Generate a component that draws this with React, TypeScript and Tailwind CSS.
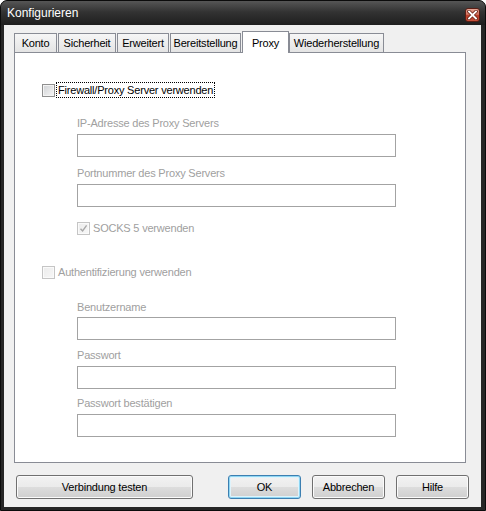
import React from 'react';

const font = "font-['Liberation_Sans',Arial,sans-serif] text-[11px] tracking-[-0.2px]";

interface Tab {
  label: string;
  className: string;
  active?: boolean;
}

const tabs: Tab[] = [
  { label: 'Konto', className: 'w-[43px]' },
  { label: 'Sicherheit', className: 'ml-[1px] w-[58px]' },
  { label: 'Erweitert', className: 'ml-[1px] w-[52px]' },
  { label: 'Bereitstellung', className: 'ml-[1px] w-[71px]' },
  { label: 'Proxy', className: 'ml-[1px] w-[47px]', active: true },
  { label: 'Wiederherstellung', className: 'w-[95px]' },
];

const CheckBox: React.FC<{ disabled?: boolean; checked?: boolean }> = ({ disabled, checked }) => (
  <div
    className={
      disabled
        ? 'w-[13px] h-[13px] shrink-0 border border-[#c5c5c5] bg-[linear-gradient(135deg,#ececec,#f7f7f7)] shadow-[inset_0_0_0_1px_#fafafa] flex items-center justify-center'
        : 'w-[13px] h-[13px] shrink-0 border border-[#8f8f8f] bg-[linear-gradient(135deg,#cfd1d4,#f7f7f7)] shadow-[inset_0_0_0_1px_#f4f4f4] flex items-center justify-center'
    }
  >
    {checked && (
      <svg width="9" height="9" viewBox="0 0 9 9">
        <path d="M1.5 4.8 L3.6 7 L7.6 1.4" fill="none" stroke="#a8a8a8" strokeWidth="1.4" />
      </svg>
    )}
  </div>
);

const Label: React.FC<{ text: string; className: string }> = ({ text, className }) => (
  <div className={`h-[14px] leading-[14px] text-[#a0a0a0] ${className}`}>{text}</div>
);

const Field: React.FC<{ className: string }> = ({ className }) => (
  <div className={`w-[319px] h-[23px] border border-[#a3a3a3] bg-white ${className}`} />
);

const Button: React.FC<{ label: string; className: string; primary?: boolean }> = ({ label, className, primary }) => (
  <div
    className={
      primary
        ? `h-[24px] flex items-center justify-center rounded-[3px] border border-[#3c7fb1] bg-[linear-gradient(#f2f2f2_0%,#ebebeb_50%,#dddddd_50%,#cfcfcf_100%)] shadow-[inset_0_0_0_1px_#8fd6f3,inset_0_0_0_2px_#dff3fb] text-black ${className}`
        : `h-[24px] flex items-center justify-center rounded-[3px] border border-[#707070] bg-[linear-gradient(#f2f2f2_0%,#ebebeb_50%,#dddddd_50%,#cfcfcf_100%)] shadow-[inset_0_0_0_1px_#fbfbfb] text-black ${className}`
    }
  >
    {label}
  </div>
);

export default function App() {
  return (
    <div className={`w-[486px] h-[511px] rounded-t-[7px] border border-[#0b0b0b] bg-[#262626] overflow-hidden ${font}`}>
      {/* title bar */}
      <div className="h-[24px] flex items-start bg-[linear-gradient(#565656,#333333_45%,#1e1e1e)] pl-[6px] pr-[5px]">
        <span className="mt-[5px] text-[12px] tracking-normal text-white leading-[14px]">Konfigurieren</span>
        <div className="ml-auto mt-[7px] w-[15px] h-[14px] rounded-[3px] border border-[#5c1e14] bg-[linear-gradient(#e9a898,#d0705d_45%,#b93c27_55%,#c7523c)] flex items-center justify-center">
          <svg width="11" height="10" viewBox="0 0 11 10">
            <path d="M2 1.5 L9 8.5 M9 1.5 L2 8.5" stroke="#6b2417" strokeWidth="3.4" strokeLinecap="square" />
            <path d="M2 1.5 L9 8.5 M9 1.5 L2 8.5" stroke="#ffffff" strokeWidth="1.8" strokeLinecap="square" />
          </svg>
        </div>
      </div>

      {/* client area */}
      <div className="ml-[3px] w-[477px] h-[482px] bg-[#f0f0f0] flex flex-col">
        <div className="h-[27px] flex items-end pl-[10px]">
          {tabs.map((t) =>
            t.active ? (
              <div
                key={t.label}
                className={`relative z-10 -mb-px h-[22px] border border-b-0 border-[#898c95] bg-white flex items-start justify-center pt-[3px] text-black ${t.className}`}
              >
                {t.label}
              </div>
            ) : (
              <div
                key={t.label}
                className={`h-[19px] border border-b-0 border-[#898c95] bg-[linear-gradient(#f6f6f6,#e4e4e4)] flex items-center justify-center text-black ${t.className}`}
              >
                {t.label}
              </div>
            )
          )}
        </div>

        <div className="ml-[10px] w-[452px] h-[411px] border border-[#898c95] bg-white flex flex-col">
          <div className="mt-[29px] ml-[27px] h-[16px] flex items-center">
            <CheckBox />
            <span className="ml-[1px] px-[1px] h-[16px] leading-[14px] border border-dotted border-black text-black">
              Firewall/Proxy Server verwenden
            </span>
          </div>

          <div className="ml-[62px] flex flex-col">
            <Label text="IP-Adresse des Proxy Servers" className="mt-[18px]" />
            <Field className="mt-[4px]" />
            <Label text="Portnummer des Proxy Servers" className="mt-[9px]" />
            <Field className="mt-[4px]" />
            <div className="mt-[13px] h-[16px] flex items-center">
              <CheckBox disabled checked />
              <span className="ml-[3px] text-[#a0a0a0]">SOCKS 5 verwenden</span>
            </div>
          </div>

          <div className="mt-[28px] ml-[27px] h-[16px] flex items-center">
            <CheckBox disabled />
            <span className="ml-[3px] text-[#a0a0a0]">Authentifizierung verwenden</span>
          </div>

          <div className="ml-[62px] flex flex-col">
            <Label text="Benutzername" className="mt-[20px]" />
            <Field className="mt-[3px]" />
            <Label text="Passwort" className="mt-[8px]" />
            <Field className="mt-[4px]" />
            <Label text="Passwort bestätigen" className="mt-[7px]" />
            <Field className="mt-[4px]" />
          </div>
        </div>

        <div className="mt-[12px] flex px-[12px]">
          <Button label="Verbindung testen" className="w-[177px]" />
          <div className="flex-1" />
          <div className="flex gap-[11px]">
            <Button label="OK" className="w-[73px]" primary />
            <Button label="Abbrechen" className="w-[73px]" />
            <Button label="Hilfe" className="w-[73px]" />
          </div>
        </div>
      </div>
    </div>
  );
}
